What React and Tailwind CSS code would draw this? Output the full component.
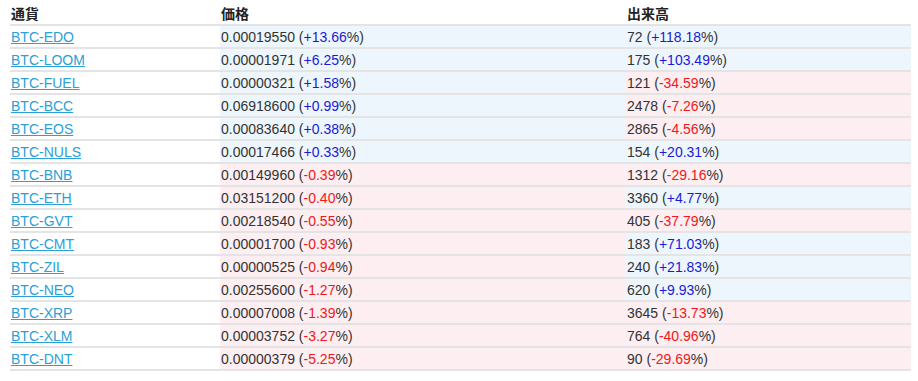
const rows = [
  ['BTC-EDO', '0.00019550', '+13.66', '72', '+118.18'],
  ['BTC-LOOM', '0.00001971', '+6.25', '175', '+103.49'],
  ['BTC-FUEL', '0.00000321', '+1.58', '121', '-34.59'],
  ['BTC-BCC', '0.06918600', '+0.99', '2478', '-7.26'],
  ['BTC-EOS', '0.00083640', '+0.38', '2865', '-4.56'],
  ['BTC-NULS', '0.00017466', '+0.33', '154', '+20.31'],
  ['BTC-BNB', '0.00149960', '-0.39', '1312', '-29.16'],
  ['BTC-ETH', '0.03151200', '-0.40', '3360', '+4.77'],
  ['BTC-GVT', '0.00218540', '-0.55', '405', '-37.79'],
  ['BTC-CMT', '0.00001700', '-0.93', '183', '+71.03'],
  ['BTC-ZIL', '0.00000525', '-0.94', '240', '+21.83'],
  ['BTC-NEO', '0.00255600', '-1.27', '620', '+9.93'],
  ['BTC-XRP', '0.00007008', '-1.39', '3645', '-13.73'],
  ['BTC-XLM', '0.00003752', '-3.27', '764', '-40.96'],
  ['BTC-DNT', '0.00000379', '-5.25', '90', '-29.69'],
];

const Change = ({ value, change, width }) => {
  const up = change.startsWith('+');
  return (
    <div className={`${width} flex items-center pl-px pt-px ${up ? 'bg-[#eef6fd]' : 'bg-[#fdeef2]'}`}>
      {value} (<span className={up ? 'text-[#1a1ad6]' : 'text-[#f01818]'}>{change}</span>%)
    </div>
  );
};

const App = () => {
  return (
    <div className="bg-white w-[918px] h-[381px] pl-[10px] text-[14px] text-[#333] font-['Liberation_Sans','Noto_Sans_CJK_JP',sans-serif]">
      <div className="w-[901px]">
        <div className="flex h-[26px] border-b-2 border-[#e4e4e4] font-bold text-[14px] text-[#222]">
          <div className="w-[210px] pl-px pt-[4px]">通貨</div>
          <div className="w-[406px] pl-px pt-[4px]">価格</div>
          <div className="w-[285px] pl-px pt-[4px]">出来高</div>
        </div>
        {rows.map(([pair, price, pc, vol, vc]) => (
          <div key={pair} className="flex h-[23px] border-b-2 border-[#e4e4e4]">
            <div className="w-[210px] flex items-center pl-px pt-px">
              <a href="#" className="text-[#2a9fd8] underline">{pair}</a>
            </div>
            <Change value={price} change={pc} width="w-[406px]" />
            <Change value={vol} change={vc} width="w-[285px]" />
          </div>
        ))}
      </div>
    </div>
  );
};

export default App;
